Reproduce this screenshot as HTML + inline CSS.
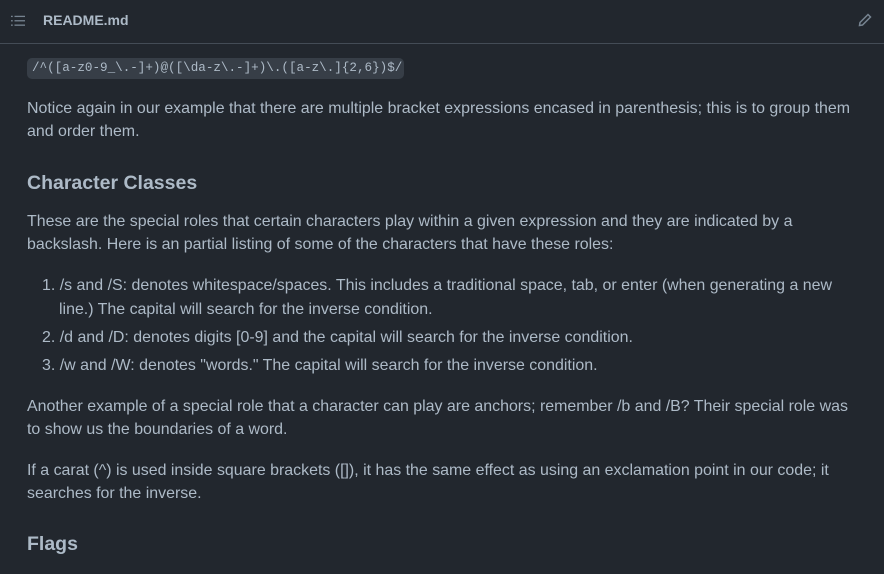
<!DOCTYPE html><html><head><style>
body{margin:0;background:#22272e;width:884px;height:574px;overflow:hidden;font-family:"Liberation Sans",sans-serif;color:#adbac7;position:relative}
.l{position:absolute;left:27px;font-size:15.95px;white-space:nowrap;line-height:20px}
.h{position:absolute;left:27px;font-size:19.5px;font-weight:bold;color:#adbac7;white-space:nowrap;line-height:24px}
.hdr{position:absolute;left:0;top:0;width:884px;height:43px;border-bottom:1px solid #444c56}
code{position:absolute;left:27px;top:58px;height:21px;width:377px;background:#373e47;border-radius:5px;font-family:"Liberation Mono",monospace;font-size:12.6px;line-height:21px;padding-left:5px;box-sizing:border-box;color:#adbac7}
</style></head><body>
<div class="hdr">
<svg style="position:absolute;left:11px;top:14px" width="14" height="14" viewBox="0 0 16 16" fill="#768390"><rect x="0" y="2" width="2" height="1.5"/><rect x="0" y="7" width="2" height="1.5"/><rect x="0" y="12" width="2" height="1.5"/><rect x="4" y="2" width="12" height="1.5"/><rect x="4" y="7" width="12" height="1.5"/><rect x="4" y="12" width="12" height="1.5"/></svg>
<div style="position:absolute;left:43px;top:12px;font-size:14px;font-weight:bold;color:#adbac7">README.md</div>
<svg style="position:absolute;left:857px;top:12px" width="16" height="16" viewBox="0 0 16 16" fill="none" stroke="#768390" stroke-width="1.5"><path d="M11 2.5l2.5 2.5L5.5 13 2.5 13.5 3 10.5z"/></svg>
</div>
<code>/^([a-z0-9_\.-]+)@([\da-z\.-]+)\.([a-z\.]{2,6})$/</code>
<div class="l" style="top:99px">Notice again in our example that there are multiple bracket expressions encased in parenthesis; this is to group them</div>
<div class="l" style="top:122px">and order them.</div>
<div class="h" style="top:171px">Character Classes</div>
<div class="l" style="top:212px">These are the special roles that certain characters play within a given expression and they are indicated by a</div>
<div class="l" style="top:235px">backslash. Here is an partial listing of some of the characters that have these roles:</div>
<div class="l" style="top:276px;left:42px">1. /s and /S: denotes whitespace/spaces. This includes a traditional space, tab, or enter (when generating a new</div>
<div class="l" style="top:300px;left:59px">line.) The capital will search for the inverse condition.</div>
<div class="l" style="top:328px;left:42px">2. /d and /D: denotes digits [0-9] and the capital will search for the inverse condition.</div>
<div class="l" style="top:356px;left:42px">3. /w and /W: denotes "words." The capital will search for the inverse condition.</div>
<div class="l" style="top:397px">Another example of a special role that a character can play are anchors; remember /b and /B? Their special role was</div>
<div class="l" style="top:420px">to show us the boundaries of a word.</div>
<div class="l" style="top:461px">If a carat (^) is used inside square brackets ([]), it has the same effect as using an exclamation point in our code; it</div>
<div class="l" style="top:484px">searches for the inverse.</div>
<div class="h" style="top:532px">Flags</div>
</body></html>
